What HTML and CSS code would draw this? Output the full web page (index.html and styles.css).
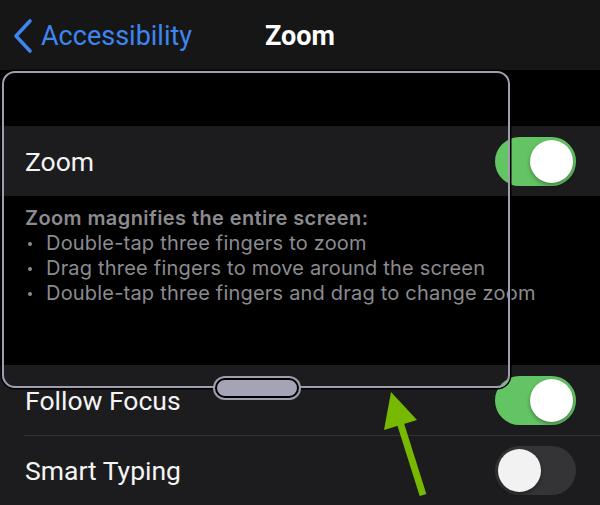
FILE: index.html
```html
<!DOCTYPE html>
<html lang="en">
<head>
  <meta charset="UTF-8" />
  <meta name="viewport" content="width=device-width,initial-scale=1.0" />
  <title>Zoom</title>
  <link rel="stylesheet" href="styles.css">
</head>
<body>

  <!-- Navigation bar -->
  <div class="navbar">
    <a class="back" href="#">
      <svg class="chevron" width="22" height="36" viewBox="0 0 22 36">
        <polyline points="18,3 4,18 18,33" />
      </svg>
      <span>Accessibility</span>
    </a>
    <h1>Zoom</h1>
  </div>

  <!-- Settings list -->
  <div class="settings">
    <div class="spacer"></div>

    <div class="row">
      <span class="label">Zoom</span>
      <span class="switch on"></span>
    </div>

    <div class="footer">
      <p class="lead">Zoom magnifies the entire screen:</p>
      <ul>
        <li>Double-tap three fingers to zoom</li>
        <li>Drag three fingers to move around the screen</li>
        <li>Double-tap three fingers and drag to change zoom</li>
      </ul>
    </div>

    <div class="group">
      <div class="row">
        <span class="label">Follow Focus</span>
        <span class="switch on"></span>
      </div>
      <div class="row">
        <span class="label">Smart Typing</span>
        <span class="switch"></span>
      </div>
    </div>
  </div>

  <!-- Zoom lens window -->
  <div class="lens">
    <div class="handle"></div>
  </div>

  <!-- Pointer arrow -->
  <svg class="arrow" width="60" height="120" viewBox="0 0 60 120">
    <line x1="47" y1="106" x2="23" y2="30" />
    <polygon points="15,3 8,41 41,31" />
  </svg>

</body>
</html>
```

FILE: styles.css
```css
* { margin:0; padding:0; box-sizing:border-box; }
body {
  width:600px; height:505px; overflow:hidden; position:relative;
  background:#000; color:#fff;
  font-family:Roboto,"Liberation Sans",sans-serif;
}

/* Navigation bar */
.navbar {
  height:70px; background:#161616; position:relative;
  display:flex; align-items:center;
}
.navbar .back {
  display:flex; align-items:center; gap:7px;
  margin-left:12px; margin-top:1px;
  color:#3d86f0; text-decoration:none; font-size:27px;
}
.chevron polyline { fill:none; stroke:#3d86f0; stroke-width:3.6; stroke-linecap:round; stroke-linejoin:round; }
.navbar h1 {
  position:absolute; left:0; right:0; text-align:center;
  font-size:27px; font-weight:700; margin-top:1px;
}

/* List */
.spacer { height:56px; }
.row {
  height:70px; background:#1c1c1e;
  display:flex; align-items:center; justify-content:space-between;
  padding:0 24px 0 25px;
}
.label { font-size:26.5px; color:#f4f4f4; }

.footer {
  height:169px; padding:10px 25px 0; color:#8b8b90;
  font-family:Inter,Roboto,sans-serif; font-size:20px; line-height:25px;
  letter-spacing:0.2px;
}
.footer .lead { font-weight:600; letter-spacing:0.4px; }
.footer ul { list-style:none; }
.footer li { position:relative; padding-left:21px; }
.footer li::before {
  content:""; position:absolute; left:3px; top:11px;
  width:4px; height:4px; border-radius:50%; background:#8b8b90;
}

.group .row + .row { position:relative; }
.group .row + .row::before {
  content:""; position:absolute; left:24px; right:0; top:0;
  border-top:1px solid #333336;
}

/* Toggle switch */
.switch {
  width:81px; height:49px; border-radius:25px; background:#343437;
  position:relative; flex-shrink:0;
}
.switch::after {
  content:""; position:absolute; top:3px; left:3px;
  width:43px; height:43px; border-radius:50%; background:#f2f2f2;
  box-shadow:0 2px 4px rgba(0,0,0,0.35);
}
.switch.on { background:#63c463; }
.switch.on::after { left:35px; background:#fff; }

/* Lens window laid over the page */
.lens {
  position:absolute; left:2px; top:71px; width:508px; height:317px;
  border:2px solid #9f9eaf; border-radius:13px;
  box-shadow:0 0 0 1.5px #000;
}
.handle {
  position:absolute; left:211px; bottom:-12px;
  width:84px; height:20px; border-radius:10px;
  background:#a5a4b6; border:2px solid #000;
  box-shadow:0 0 0 2px #9f9eaf;
}

.arrow { position:absolute; left:376px; top:389px; }
.arrow line { stroke:#76b900; stroke-width:7; }
.arrow polygon { fill:#76b900; }
```
